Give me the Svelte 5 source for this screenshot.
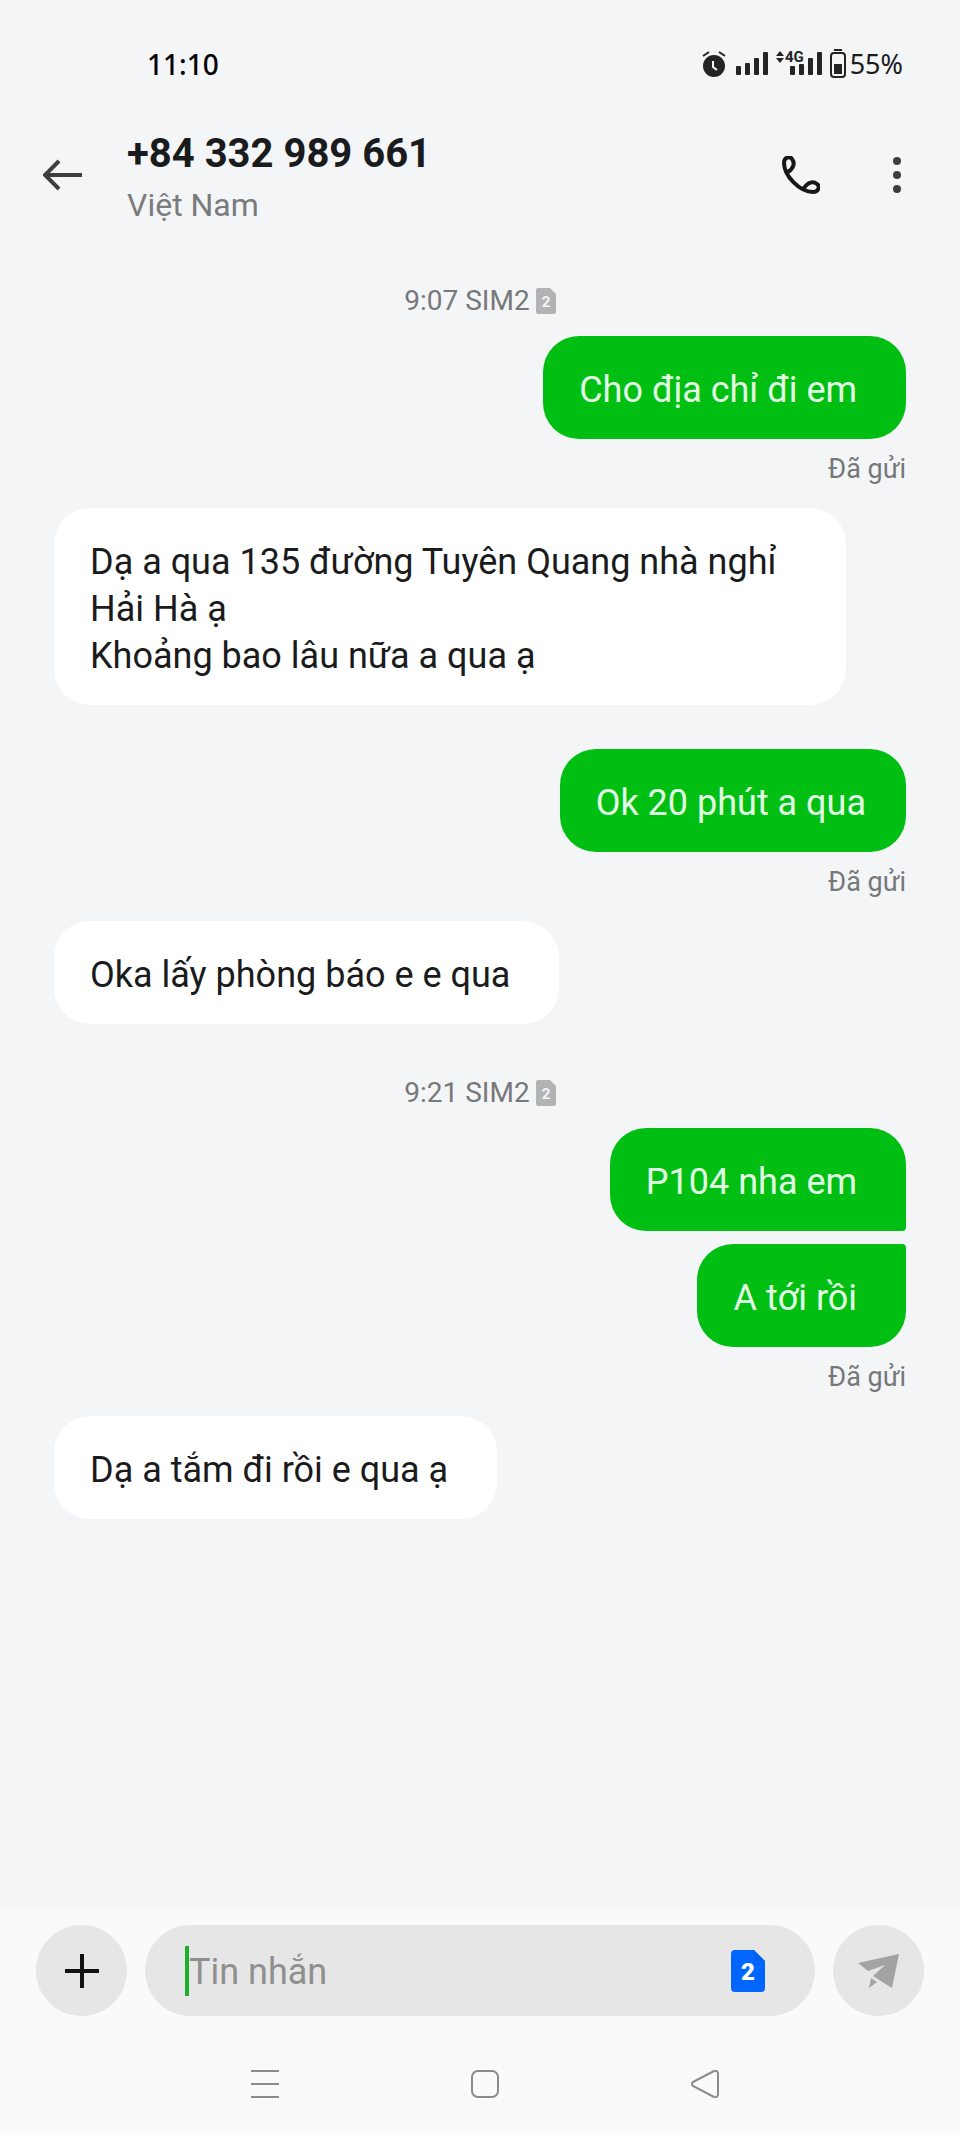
<script lang="ts">
    type Message = {
        text: string,
        mine: boolean
    };

    type Block = {
        time?: string,
        status?: string,
        messages: Message[]
    };

    let draft = $state("");

    // some messages were typed with a trailing space, the bubble keeps it
    const blocks: Block[] = [
        {
            time: "9:07 SIM2",
            status: "Đã gửi",
            messages: [{ text: "Cho địa chỉ đi em ", mine: true }]
        },
        {
            messages: [{
                text: "Dạ a qua 135 đường Tuyên Quang nhà nghỉ Hải Hà ạ\nKhoảng bao lâu nữa a qua ạ",
                mine: false
            }]
        },
        {
            status: "Đã gửi",
            messages: [{ text: "Ok 20 phút a qua", mine: true }]
        },
        {
            messages: [{ text: "Oka lấy phòng báo e e qua ", mine: false }]
        },
        {
            time: "9:21 SIM2",
            status: "Đã gửi",
            messages: [
                { text: "P104 nha em ", mine: true },
                { text: "A tới rồi ", mine: true }
            ]
        },
        {
            messages: [{ text: "Dạ a tắm đi rồi e qua ạ ", mine: false }]
        }
    ];
</script>

<div class="phone">
    <div class="status-bar">
        <span class="clock">11:10</span>
        <div class="indicators">
            <svg width="26" height="30" viewBox="0 0 26 30">
                <circle cx="12" cy="17" r="11" fill="#222426" />
                <path d="M1 7L7 3M23 7L17 3" stroke="#222426" stroke-width="2" />
                <path d="M11 12v6l4 3" fill="none" stroke="#f3f5f7" stroke-width="2" />
            </svg>
            <svg width="32" height="30" viewBox="0 0 32 30" fill="#222426">
                <rect x="0" y="17" width="5" height="9" rx="1" />
                <rect x="9" y="14" width="5" height="12" rx="1" />
                <rect x="18" y="9" width="5" height="17" rx="1" />
                <rect x="27" y="3" width="5" height="23" rx="1" />
            </svg>
            <svg width="46" height="30" viewBox="0 0 46 30" fill="#222426">
                <path d="M0 7L4 2L8 7zM0 9h8L4 14z" />
                <text class="network" x="9" y="13">4G</text>
                <rect x="14" y="17" width="5" height="9" rx="1" />
                <rect x="23" y="15" width="5" height="11" rx="1" />
                <rect x="32" y="9" width="5" height="17" rx="1" />
                <rect x="41" y="3" width="5" height="23" rx="1" />
            </svg>
            <svg width="16" height="30" viewBox="0 0 16 30" fill="#222426">
                <rect x="4" y="0" width="8" height="2" />
                <rect x="1" y="4" width="14" height="24" rx="3" fill="none" stroke="#222426" stroke-width="2" />
                <rect x="4" y="15" width="8" height="10" />
            </svg>
            <span class="percent">55%</span>
        </div>
    </div>

    <header>
        <button class="icon" aria-label="Quay lại">
            <svg width="40" height="32" viewBox="0 0 40 32" fill="none" stroke="#3c3e40" stroke-width="4">
                <path d="M39 16H2M16 2L2 16L16 30" />
            </svg>
        </button>
        <div class="contact">
            <h1>+84 332 989 661</h1>
            <p>Việt Nam</p>
        </div>
        <button class="icon" aria-label="Gọi">
            <svg width="38" height="38" viewBox="0 0 38 38" fill="none" stroke="#161718" stroke-width="4" stroke-linejoin="round">
                <path d="M2 7C2 20 18 36 31 36C37 36 38 30 35 28C31 25 26 26 22 32" />
                <path d="M2 7C2 1 8 0 10 3C13 7 12 12 6 16" />
            </svg>
        </button>
        <button class="icon" aria-label="Thêm tùy chọn">
            <svg width="10" height="38" viewBox="0 0 10 38" fill="#3c3e40">
                <circle cx="5" cy="5" r="4" />
                <circle cx="5" cy="19" r="4" />
                <circle cx="5" cy="33" r="4" />
            </svg>
        </button>
    </header>

    <main>
        {#each blocks as block}
        {#if block.time}
        <div class="stamp">
            <span>{block.time}</span>
            <svg width="20" height="26" viewBox="0 0 20 26">
                <path d="M2 0H14L20 6V24Q20 26 18 26H2Q0 26 0 24V2Q0 0 2 0z" fill="#b2b3b5" />
                <text class="sim-small" x="10" y="19">2</text>
            </svg>
        </div>
        {/if}
        <div class="block" class:sent={block.messages[0].mine}>
            {#each block.messages as message}
            <p class="bubble" class:mine={message.mine}>{message.text}</p>
            {/each}
            {#if block.status}
            <span class="status">{block.status}</span>
            {/if}
        </div>
        {/each}
    </main>

    <footer>
        <form class="composer" onsubmit={(e) => e.preventDefault()}>
            <button type="button" class="round" aria-label="Đính kèm">
                <svg width="34" height="34" viewBox="0 0 34 34" stroke="#111" stroke-width="4">
                    <path d="M17 0V34M0 17H34" />
                </svg>
            </button>
            <div class="field">
                <span class="caret"></span>
                <input type="text" placeholder="Tin nhắn" aria-label="Tin nhắn" bind:value={draft} />
                <button type="button" class="icon" aria-label="SIM 2">
                    <svg width="34" height="42" viewBox="0 0 34 42">
                        <path d="M4 0H23L34 11V38Q34 42 30 42H4Q0 42 0 38V4Q0 0 4 0z" fill="#0066ff" />
                        <path d="M23 0L34 11H26Q23 11 23 8z" fill="#0055d8" opacity="0.4" />
                        <text class="sim-large" x="17" y="30">2</text>
                    </svg>
                </button>
            </div>
            <button type="submit" class="round" aria-label="Gửi">
                <svg width="42" height="36" viewBox="0 0 42 36" fill="#a3a3a3">
                    <path d="M0 10L41 1L34 35L15 23L27 12L10 18zM13 25L19 29L11 35z" />
                </svg>
            </button>
        </form>
        <nav>
            <button class="icon" aria-label="Gần đây">
                <svg width="28" height="28" viewBox="0 0 28 28" stroke="#8c8c8c" stroke-width="2">
                    <path d="M0 1H28M0 14H28M0 27H28" />
                </svg>
            </button>
            <button class="icon" aria-label="Màn hình chính">
                <svg width="28" height="28" viewBox="0 0 28 28" fill="none" stroke="#8c8c8c" stroke-width="2">
                    <rect x="1" y="1" width="26" height="26" rx="6" />
                </svg>
            </button>
            <button class="icon" aria-label="Trở về">
                <svg width="28" height="28" viewBox="0 0 28 28" fill="none" stroke="#8c8c8c" stroke-width="2">
                    <path d="M2 12L23 1Q27 0 27 4V24Q27 28 23 27L2 16Q0 14 2 12z" />
                </svg>
            </button>
        </nav>
    </footer>
</div>

<style>
    :global(body) {
        margin: 0;
        background-color: #f3f5f7;
    }

    .phone {
        display: flex;
        flex-direction: column;
        min-height: 100vh;
        font-family: Roboto, "Noto Sans", sans-serif;
        color: #1a1b1c;
        background-color: #f3f5f7;
    }

    h1, p {
        margin: 0;
    }

    svg {
        display: block;
        flex: none;
    }

    button {
        padding: 0;
        border: none;
        background: none;
        cursor: pointer;
    }

    .status-bar {
        display: flex;
        justify-content: space-between;
        align-items: center;
        padding: 44px 57px 40px 147px;
        font-family: "Noto Sans", sans-serif;
        line-height: 40px;
    }

    .clock {
        font-size: 28px;
        font-weight: 500;
        color: #000;
    }

    .indicators {
        display: flex;
        align-items: center;
        gap: 8px;
    }

    .network {
        font: 700 15px Roboto, sans-serif;
    }

    .percent {
        margin-left: -4px;
        font-size: 27px;
    }

    header {
        display: flex;
        align-items: center;
        gap: 72px;
        padding: 0 58px 0 43px;
    }

    .contact {
        flex: 1;
        margin-left: -28px;
    }

    h1 {
        font-size: 40px;
        line-height: 60px;
        font-weight: 700;
    }

    .contact p {
        font-size: 32px;
        line-height: 42px;
        color: #7a7b7d;
    }

    main {
        flex: 1;
        padding: 6px 54px 44px;
    }

    .stamp {
        display: flex;
        justify-content: center;
        align-items: center;
        gap: 6px;
        margin-top: 54px;
        margin-bottom: 20px;
        font-size: 28px;
        line-height: 30px;
        color: #77787a;
    }

    .sim-small {
        font: 700 15px Roboto, sans-serif;
        fill: #f3f5f7;
        text-anchor: middle;
    }

    .block {
        display: flex;
        flex-direction: column;
        align-items: flex-start;
        gap: 13px;
    }

    .sent {
        align-items: flex-end;
    }

    .block:not(.sent) + .sent {
        margin-top: 44px;
    }

    .bubble {
        box-sizing: border-box;
        max-width: 93%;
        padding: 31px 40px 25px 36px;
        font-size: 36px;
        line-height: 47px;
        white-space: break-spaces;
        border-radius: 36px;
        background-color: #fff;
    }

    .mine {
        color: #e2ffe4;
        background-color: #00be12;
    }

    .mine:has(+ .mine) {
        border-bottom-right-radius: 4px;
    }

    .mine + .mine {
        border-top-right-radius: 4px;
    }

    .status {
        font-size: 27px;
        line-height: 34px;
        margin-bottom: 22px;
        color: #77787a;
    }

    footer {
        padding: 18px 36px 35px;
        background-color: #fafafa;
    }

    .composer {
        display: flex;
        gap: 18px;
    }

    .round {
        display: flex;
        align-items: center;
        justify-content: center;
        width: 91px;
        height: 91px;
        border-radius: 50%;
        background-color: #e6e6e6;
    }

    .field {
        flex: 1;
        min-width: 0;
        display: flex;
        align-items: center;
        padding: 0 50px 0 40px;
        border-radius: 46px;
        background-color: #e6e6e6;
    }

    .caret {
        width: 4px;
        height: 50px;
        background-color: #1fae2c;
    }

    input {
        flex: 1;
        min-width: 0;
        padding: 4px 0 0;
        border: none;
        outline: none;
        background: none;
        font-family: inherit;
        font-size: 36px;
        line-height: 47px;
        color: #1a1b1c;
    }

    input::placeholder {
        color: #8f8f8f;
        opacity: 1;
    }

    .sim-large {
        font: 900 24px Roboto, sans-serif;
        fill: #fff;
        text-anchor: middle;
    }

    nav {
        display: flex;
        justify-content: center;
        gap: 192px;
        margin-top: 54px;
        padding-left: 9px;
    }
</style>
